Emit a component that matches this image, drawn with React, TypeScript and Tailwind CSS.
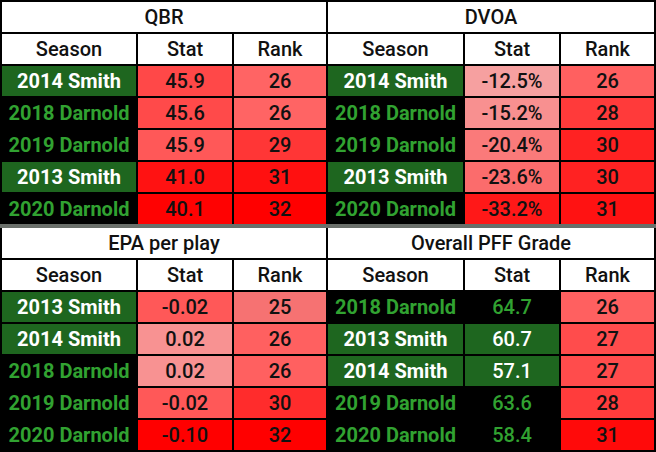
import React from 'react';

type Row = {
  season: string;
  smith: boolean;
  stat: string;
  statBg: string;
  rank: string;
  rankBg: string;
};

interface StatTableProps {
  title: string;
  cols: string;
  rows: Row[];
}

// Smith rows get the dark green fill, Darnold rows sit on black with green text
function SeasonCell({ season, smith }: { season: string; smith: boolean }) {
  return (
    <div
      className={
        smith
          ? 'bg-[#1e661f] text-white font-bold text-center'
          : 'bg-black text-[#31a231] font-bold text-center'
      }
    >
      {season}
    </div>
  );
}

function StatTable({ title, cols, rows }: StatTableProps) {
  return (
    <div className={`grid ${cols} gap-[2px] bg-black`}>
      <div className="col-span-3 bg-white text-[#111] font-medium text-center">{title}</div>
      <div className="bg-white text-[#111] font-medium text-center">Season</div>
      <div className="bg-white text-[#111] font-medium text-center">Stat</div>
      <div className="bg-white text-[#111] font-medium text-center">Rank</div>
      {rows.map((r) => (
        <React.Fragment key={r.season}>
          <SeasonCell season={r.season} smith={r.smith} />
          <div className={`${r.statBg} font-medium text-center`}>{r.stat}</div>
          <div className={`${r.rankBg} text-[#111] font-medium text-center`}>{r.rank}</div>
        </React.Fragment>
      ))}
    </div>
  );
}

const qbr: Row[] = [
  { season: '2014 Smith', smith: true, stat: '45.9', statBg: 'bg-[#ff4848] text-[#111]', rank: '26', rankBg: 'bg-[#ff6464]' },
  { season: '2018 Darnold', smith: false, stat: '45.6', statBg: 'bg-[#ff4a4a] text-[#111]', rank: '26', rankBg: 'bg-[#ff6464]' },
  { season: '2019 Darnold', smith: false, stat: '45.9', statBg: 'bg-[#ff5858] text-[#111]', rank: '29', rankBg: 'bg-[#ff3636]' },
  { season: '2013 Smith', smith: true, stat: '41.0', statBg: 'bg-[#ff1212] text-[#111]', rank: '31', rankBg: 'bg-[#ff1010]' },
  { season: '2020 Darnold', smith: false, stat: '40.1', statBg: 'bg-[#ff0202] text-[#111]', rank: '32', rankBg: 'bg-[#ff0000]' },
];

const dvoa: Row[] = [
  { season: '2014 Smith', smith: true, stat: '-12.5%', statBg: 'bg-[#f6a0a0] text-[#111]', rank: '26', rankBg: 'bg-[#ff6060]' },
  { season: '2018 Darnold', smith: false, stat: '-15.2%', statBg: 'bg-[#f89090] text-[#111]', rank: '28', rankBg: 'bg-[#ff3a3a]' },
  { season: '2019 Darnold', smith: false, stat: '-20.4%', statBg: 'bg-[#fa7a7a] text-[#111]', rank: '30', rankBg: 'bg-[#ff2222]' },
  { season: '2013 Smith', smith: true, stat: '-23.6%', statBg: 'bg-[#fb6c6c] text-[#111]', rank: '30', rankBg: 'bg-[#ff2222]' },
  { season: '2020 Darnold', smith: false, stat: '-33.2%', statBg: 'bg-[#ff1818] text-[#111]', rank: '31', rankBg: 'bg-[#ff1212]' },
];

const epa: Row[] = [
  { season: '2013 Smith', smith: true, stat: '-0.02', statBg: 'bg-[#ff5858] text-[#111]', rank: '25', rankBg: 'bg-[#f67272]' },
  { season: '2014 Smith', smith: true, stat: '0.02', statBg: 'bg-[#f89292] text-[#111]', rank: '26', rankBg: 'bg-[#ff6060]' },
  { season: '2018 Darnold', smith: false, stat: '0.02', statBg: 'bg-[#f89292] text-[#111]', rank: '26', rankBg: 'bg-[#ff6060]' },
  { season: '2019 Darnold', smith: false, stat: '-0.02', statBg: 'bg-[#ff5858] text-[#111]', rank: '30', rankBg: 'bg-[#ff2c2c]' },
  { season: '2020 Darnold', smith: false, stat: '-0.10', statBg: 'bg-[#ff0000] text-[#111]', rank: '32', rankBg: 'bg-[#ff0000]' },
];

const pff: Row[] = [
  { season: '2018 Darnold', smith: false, stat: '64.7', statBg: 'bg-black text-[#31a231] font-bold', rank: '26', rankBg: 'bg-[#ff6060]' },
  { season: '2013 Smith', smith: true, stat: '60.7', statBg: 'bg-[#1e661f] text-white font-bold', rank: '27', rankBg: 'bg-[#ff4c4c]' },
  { season: '2014 Smith', smith: true, stat: '57.1', statBg: 'bg-[#1e661f] text-white font-bold', rank: '27', rankBg: 'bg-[#ff4c4c]' },
  { season: '2019 Darnold', smith: false, stat: '63.6', statBg: 'bg-black text-[#31a231] font-bold', rank: '28', rankBg: 'bg-[#ff3c3c]' },
  { season: '2020 Darnold', smith: false, stat: '58.4', statBg: 'bg-black text-[#31a231] font-bold', rank: '31', rankBg: 'bg-[#ff0a0a]' },
];

export default function App() {
  return (
    <div className="w-[656px] h-[452px] bg-black font-['Roboto',sans-serif] text-[20px] leading-[30px] flex flex-col">
      <div className="flex gap-[2px] px-[2px] pt-[2px]">
        <StatTable title="QBR" cols="grid-cols-[134px_94px_92px]" rows={qbr} />
        <StatTable title="DVOA" cols="grid-cols-[135px_94px_93px]" rows={dvoa} />
      </div>
      <div className="h-[4px] bg-[#6a6f6a]" />
      <div className="flex gap-[2px] px-[2px] pb-[2px]">
        <StatTable title="EPA per play" cols="grid-cols-[134px_94px_92px]" rows={epa} />
        <StatTable title="Overall PFF Grade" cols="grid-cols-[135px_94px_93px]" rows={pff} />
      </div>
    </div>
  );
}
